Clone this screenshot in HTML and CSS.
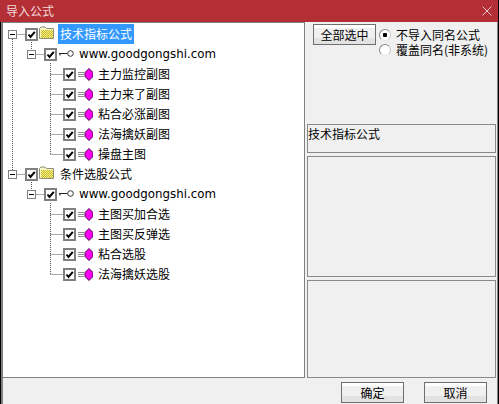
FILE: index.html
```
<!DOCTYPE html>
<html lang="zh">
<head>
<meta charset="utf-8">
<title>导入公式</title>
<link rel="stylesheet" href="styles.css">
</head>
<body>
<svg width="0" height="0" class="defs">
  <defs>
    <pattern id="dither-y" width="2" height="2" patternUnits="userSpaceOnUse">
      <rect width="2" height="2" fill="#f7f27a"/>
      <rect width="1" height="1" fill="#c9b93a"/>
      <rect x="1" y="1" width="1" height="1" fill="#c9b93a"/>
    </pattern>
    <symbol id="check" viewBox="0 0 13 13">
      <rect x="1" y="1" width="11" height="11" fill="#fff" stroke="#808080" stroke-width="2"/>
      <path d="M3.500 6.500 L5.500 9 L9.800 3.800" fill="none" stroke="#000" stroke-width="2"/>
    </symbol>
    <symbol id="folder" viewBox="0 0 16 13">
      <path d="M.5 12.500V2.500L2 1H6L7.500 2.500H14.500V12.500Z" fill="#fbf8c8" stroke="#8e8e78"/>
      <rect x="2" y="4" width="12" height="8" fill="url(#dither-y)"/>
    </symbol>
    <symbol id="key" viewBox="0 0 15 7">
      <circle cx="11.500" cy="3.500" r="2.800" fill="#fff" stroke="#333"/>
      <path d="M0 3.500H8.500M1 3V5.500" stroke="#222" fill="none"/>
    </symbol>
    <symbol id="gem" viewBox="0 0 15 13">
      <path d="M0 4.500H6M0 6.500H6M0 8.500H6" stroke="#8f8f8f" fill="none"/>
      <path d="M11 .5L15 4.500V8.500L11 12.500L7 8.500V4.500Z" fill="#f800f0" stroke="#500050"/>
    </symbol>
  </defs>
</svg>
<main class="dialog">
  <header class="titlebar">
    <span class="title">导入公式</span>
    <svg class="close" viewBox="0 0 10 10"><path d="M.5 .5L9.500 9.500M9.500 .5L.5 9.500" stroke="#e8c8ca" fill="none"/></svg>
  </header>
  <div class="content">
    <div class="body">
      <section class="tree">
        <svg class="lines" width="300" height="355">
          <path d="M10.500 17V148M10.500 12.500H23M29.500 20V30M29.500 32.500H42M48.500 41V132.500M48.500 52.500H61M48.500 72.500H61M48.500 92.500H61M48.500 112.500H61M48.500 132.500H61M10.500 152.500H23M29.500 160V170M29.500 172.500H42M48.500 181V252.500M48.500 192.500H61M48.500 212.500H61M48.500 232.500H61M48.500 252.500H61" stroke="#555" stroke-dasharray="1 1" fill="none"/>
        </svg>
        <div class="row lvl0"><span class="exp"></span><svg class="chk"><use href="#check"/></svg><svg class="folder"><use href="#folder"/></svg><span class="label selected">技术指标公式</span></div>
        <div class="row lvl1"><span class="exp"></span><svg class="chk"><use href="#check"/></svg><svg class="key"><use href="#key"/></svg><span class="label url">www.goodgongshi.com</span></div>
        <div class="row lvl2"><svg class="chk"><use href="#check"/></svg><svg class="gem"><use href="#gem"/></svg><span class="label">主力监控副图</span></div>
        <div class="row lvl2"><svg class="chk"><use href="#check"/></svg><svg class="gem"><use href="#gem"/></svg><span class="label">主力来了副图</span></div>
        <div class="row lvl2"><svg class="chk"><use href="#check"/></svg><svg class="gem"><use href="#gem"/></svg><span class="label">粘合必涨副图</span></div>
        <div class="row lvl2"><svg class="chk"><use href="#check"/></svg><svg class="gem"><use href="#gem"/></svg><span class="label">法海擒妖副图</span></div>
        <div class="row lvl2"><svg class="chk"><use href="#check"/></svg><svg class="gem"><use href="#gem"/></svg><span class="label">操盘主图</span></div>
        <div class="row lvl0"><span class="exp"></span><svg class="chk"><use href="#check"/></svg><svg class="folder"><use href="#folder"/></svg><span class="label plain">条件选股公式</span></div>
        <div class="row lvl1"><span class="exp"></span><svg class="chk"><use href="#check"/></svg><svg class="key"><use href="#key"/></svg><span class="label url">www.goodgongshi.com</span></div>
        <div class="row lvl2"><svg class="chk"><use href="#check"/></svg><svg class="gem"><use href="#gem"/></svg><span class="label">主图买加合选</span></div>
        <div class="row lvl2"><svg class="chk"><use href="#check"/></svg><svg class="gem"><use href="#gem"/></svg><span class="label">主图买反弹选</span></div>
        <div class="row lvl2"><svg class="chk"><use href="#check"/></svg><svg class="gem"><use href="#gem"/></svg><span class="label">粘合选股</span></div>
        <div class="row lvl2"><svg class="chk"><use href="#check"/></svg><svg class="gem"><use href="#gem"/></svg><span class="label">法海擒妖选股</span></div>
      </section>
      <aside class="side">
        <div class="options">
          <button class="btn">全部选中</button>
          <div class="radios">
            <div class="radio-row"><span class="radio on"></span><span>不导入同名公式</span></div>
            <div class="radio-row"><span class="radio"></span><span>覆盖同名(非系统)</span></div>
          </div>
        </div>
        <div class="box box-name">技术指标公式</div>
        <div class="box box-mid"></div>
        <div class="box box-low"></div>
      </aside>
    </div>
    <footer class="footer">
      <button class="btn">确定</button>
      <button class="btn">取消</button>
    </footer>
  </div>
</main>
</body>
</html>
```
FILE: styles.css
```
* { box-sizing: border-box; }
html, body { margin: 0; height: 100%; }
body {
  background: #000;
  font: 12px "Noto Sans CJK SC", "Liberation Sans", sans-serif;
  color: #000;
  overflow: hidden;
}
.defs { position: absolute; }
.dialog {
  margin-right: 1px;
  height: 404px;
  display: flex;
  flex-direction: column;
}
.titlebar {
  height: 22px;
  flex: none;
  background: #b32f35;
  color: #f2dcdd;
  display: flex;
  align-items: center;
  justify-content: space-between;
  padding: 0 6px;
}
.title { line-height: 22px; }
.close { width: 10px; height: 10px; }
.content {
  flex: 1;
  margin-left: 1px;
  background: #f0f0f0;
  border-left: 2px solid #808080;
  border-right: 1px solid #808080;
  display: flex;
  flex-direction: column;
}
.body {
  height: 356px;
  flex: none;
  display: flex;
}
.tree {
  position: relative;
  width: 302px;
  flex: none;
  background: #fff;
  border: solid #808080;
  border-width: 1px 1px 1px 0;
  padding-top: 1px;
}
.lines { position: absolute; left: -1px; top: -1px; }
.row {
  position: relative;
  height: 20px;
  display: flex;
  align-items: center;
}
.lvl0 { padding-left: 5px; }
.lvl1 { padding-left: 24px; }
.lvl2 { padding-left: 60px; }
.exp {
  width: 9px;
  height: 9px;
  flex: none;
  background: linear-gradient(#000, #000) center / 5px 1px no-repeat #fff;
  border: 1px solid #808080;
  margin-right: 8px;
}
.chk { width: 13px; height: 13px; flex: none; }
.folder { width: 16px; height: 13px; flex: none; margin: -4px 3px 0 1px; }
.key { width: 15px; height: 7px; flex: none; margin: -1px 5px 0 2px; }
.gem { width: 15px; height: 13px; flex: none; margin: 0 5px 0 2px; }
.label { line-height: 20px; white-space: nowrap; }
.selected { background: #3399ff; color: #fff; padding: 0 2px; }
.plain { margin-left: 2px; }
.url { font-family: "DejaVu Sans", sans-serif; font-size: 11.850px; }
.side {
  flex: 1;
  display: flex;
  flex-direction: column;
  padding: 0 1px 0 2px;
}
.options {
  height: 102px;
  flex: none;
  display: flex;
  align-items: flex-start;
  gap: 3px;
  padding: 2px 0 0 6px;
}
.btn {
  font: inherit;
  width: 63px;
  height: 21px;
  padding: 0;
  color: #000;
  border: 1px solid #6f6f6f;
  background: linear-gradient(#fff 0 15%, #f0f0f0 15% 70%, #e2e2e2 70%);
}
.radios { display: flex; flex-direction: column; padding-top: 3px; }
.radio-row { height: 15px; line-height: 15px; display: flex; align-items: center; gap: 5px; white-space: nowrap; }
.radio {
  width: 12px;
  height: 12px;
  border-radius: 50%;
  background: #fff;
  border: 1px solid;
  border-color: #8c8c8c #c8c8c8 #e8e8e8 #8c8c8c;
  flex: none;
}
.radio.on { background: radial-gradient(circle, #000 0 2px, #fff 2.500px); }
.box { border: 1px solid #8a8a8a; flex: none; }
.box-name { height: 29px; line-height: 17px; margin-bottom: 3px; }
.box-mid { height: 121px; margin-bottom: 3px; }
.box-low { height: 98px; }
.footer {
  flex: 1;
  display: flex;
  justify-content: flex-end;
  align-items: flex-start;
  gap: 20px;
  padding: 4px 10px 0 0;
}
```
